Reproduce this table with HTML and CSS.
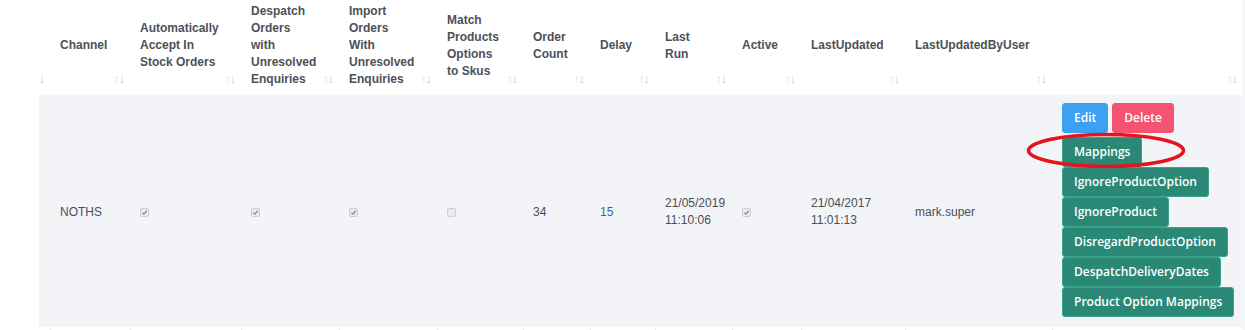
FILE: index.html
```html
<!DOCTYPE html>
<html lang="en">
<head>
<meta charset="utf-8">
<title>Channels</title>
<link rel="stylesheet" href="styles.css">
</head>
<body>
<div class="page">
  <table class="grid">
    <colgroup>
      <col class="w-lead">
      <col class="w-channel">
      <col class="w-auto">
      <col class="w-desp">
      <col class="w-import">
      <col class="w-match">
      <col class="w-count">
      <col class="w-delay">
      <col class="w-run">
      <col class="w-active">
      <col class="w-updated">
      <col class="w-user">
      <col class="w-actions">
    </colgroup>
    <thead>
      <tr>
        <th class="sort-desc"></th>
        <th class="sort">Channel</th>
        <th class="sort">Automatically<br>Accept In<br>Stock Orders</th>
        <th class="sort">Despatch<br>Orders<br>with<br>Unresolved<br>Enquiries</th>
        <th class="sort">Import<br>Orders<br>With<br>Unresolved<br>Enquiries</th>
        <th class="sort">Match<br>Products<br>Options<br>to Skus</th>
        <th class="sort">Order<br>Count</th>
        <th class="sort">Delay</th>
        <th class="sort">Last<br>Run</th>
        <th class="sort">Active</th>
        <th class="sort">LastUpdated</th>
        <th class="sort">LastUpdatedByUser</th>
        <th class="sort"></th>
      </tr>
    </thead>
    <tbody>
      <tr class="row">
        <td class="lead"></td>
        <td>NOTHS</td>
        <td><span class="cb on"><svg viewBox="0 0 8 8" class="tick"><path d="M1.5 4.2 L3.3 5.9 L6.6 2" /></svg></span></td>
        <td><span class="cb on"><svg viewBox="0 0 8 8" class="tick"><path d="M1.5 4.2 L3.3 5.9 L6.6 2" /></svg></span></td>
        <td><span class="cb on"><svg viewBox="0 0 8 8" class="tick"><path d="M1.5 4.2 L3.3 5.9 L6.6 2" /></svg></span></td>
        <td><span class="cb"></span></td>
        <td>34</td>
        <td class="link">15</td>
        <td>21/05/2019<br>11:10:06</td>
        <td><span class="cb on"><svg viewBox="0 0 8 8" class="tick"><path d="M1.5 4.2 L3.3 5.9 L6.6 2" /></svg></span></td>
        <td>21/04/2017<br>11:01:13</td>
        <td>mark.super</td>
        <td class="actions">
          <div class="stack">
            <div class="pair">
              <button class="btn btn-edit">Edit</button>
              <button class="btn btn-delete">Delete</button>
            </div>
            <button class="btn btn-teal">Mappings</button>
            <button class="btn btn-teal">IgnoreProductOption</button>
            <button class="btn btn-teal">IgnoreProduct</button>
            <button class="btn btn-teal">DisregardProductOption</button>
            <button class="btn btn-teal">DespatchDeliveryDates</button>
            <button class="btn btn-teal">Product Option Mappings</button>
            <svg class="ring" viewBox="0 0 160 37" width="160" height="37"><ellipse cx="80" cy="18.5" rx="77.5" ry="16" /></svg>
          </div>
        </td>
      </tr>
      <tr class="next">
        <td class="lead"></td>
        <td></td><td></td><td></td><td></td><td></td><td></td><td></td><td></td><td></td><td></td><td></td><td></td>
      </tr>
    </tbody>
  </table>
</div>
</body>
</html>
```

FILE: styles.css
```css
html, body {
  margin: 0;
  padding: 0;
  overflow: hidden;
}
html {
  background: #f4f5f8;
}
body {
  font-family: "Liberation Sans", Arial, sans-serif;
}
.page {
  width: 1204px;
  padding-left: 39px;
  background: #ffffff;
}
.grid {
  width: 1204px;
  table-layout: fixed;
  border-collapse: collapse;
}
.w-lead { width: 11px; }
.w-channel { width: 80px; }
.w-auto { width: 111px; }
.w-desp { width: 98px; }
.w-import { width: 98px; }
.w-match { width: 86px; }
.w-count { width: 67px; }
.w-delay { width: 65px; }
.w-run { width: 77px; }
.w-active { width: 69px; }
.w-updated { width: 104px; }
.w-user { width: 147px; }
.w-actions { width: 191px; }

.grid th {
  position: relative;
  height: 85px;
  padding: 3px 16px 7px 10px;
  text-align: left;
  vertical-align: middle;
  font-size: 12px;
  line-height: 17px;
  font-weight: bold;
  color: #4d5157;
  background: #ffffff;
  white-space: nowrap;
}
.grid th.sort-desc {
  padding: 0;
}
.grid th.sort::before,
.grid th.sort::after,
.grid th.sort-desc::after {
  position: absolute;
  bottom: 10px;
  font-size: 13px;
  line-height: 13px;
  font-weight: normal;
}
.grid th.sort::before {
  content: "\2191";
  right: 10px;
  color: #e3dcdc;
}
.grid th.sort::after,
.grid th.sort-desc::after {
  content: "\2193";
  right: 5px;
  color: #c9ccd3;
}

.grid td {
  padding: 11px 10px 9px;
  font-size: 12px;
  line-height: 17px;
  color: #4a4e55;
  vertical-align: middle;
}
.row td {
  background: #f3f4f8;
}
.row td.lead {
  padding: 0;
}
.grid td.link {
  color: #2d6ca2;
}
.next td {
  height: 40px;
  padding: 0;
  background: #ffffff;
  border-left: 1px solid #e6e8ec;
}
.next td.lead {
  border-left: none;
}

.cb {
  display: inline-block;
  position: relative;
  width: 7px;
  height: 7px;
  border: 1px solid #cfcfcf;
  border-radius: 2px;
  background: #ebebeb;
  vertical-align: middle;
}
.tick {
  position: absolute;
  left: 0;
  top: 0;
  width: 7px;
  height: 7px;
}
.tick path {
  fill: none;
  stroke: #8a8a8a;
  stroke-width: 1.4;
}

.grid td.actions {
  padding: 8px 10px 10px;
  vertical-align: top;
}
.stack {
  position: relative;
  display: flex;
  flex-direction: column;
  align-items: flex-start;
  gap: 0;
}
.pair {
  display: flex;
  gap: 4px;
  margin-bottom: 4px;
}
.btn {
  display: inline-block;
  height: 30px;
  margin: 0;
  padding: 5px 11px;
  border: 1px solid transparent;
  border-radius: 3px;
  font-family: "Open Sans", "Noto Sans", sans-serif;
  font-size: 12px;
  font-weight: 600;
  line-height: 18px;
  color: #ffffff;
  white-space: nowrap;
}
.btn-edit {
  background: #3ca0f3;
  border-color: #3ca0f3;
}
.btn-delete {
  background: #f45371;
  border-color: #f45371;
}
.btn-teal {
  background: #2b8876;
  border-color: #37a48c;
}
.ring {
  position: absolute;
  left: -36px;
  top: 29px;
  overflow: visible;
}
.ring ellipse {
  fill: none;
  stroke: #e5151f;
  stroke-width: 3.5;
}
```
